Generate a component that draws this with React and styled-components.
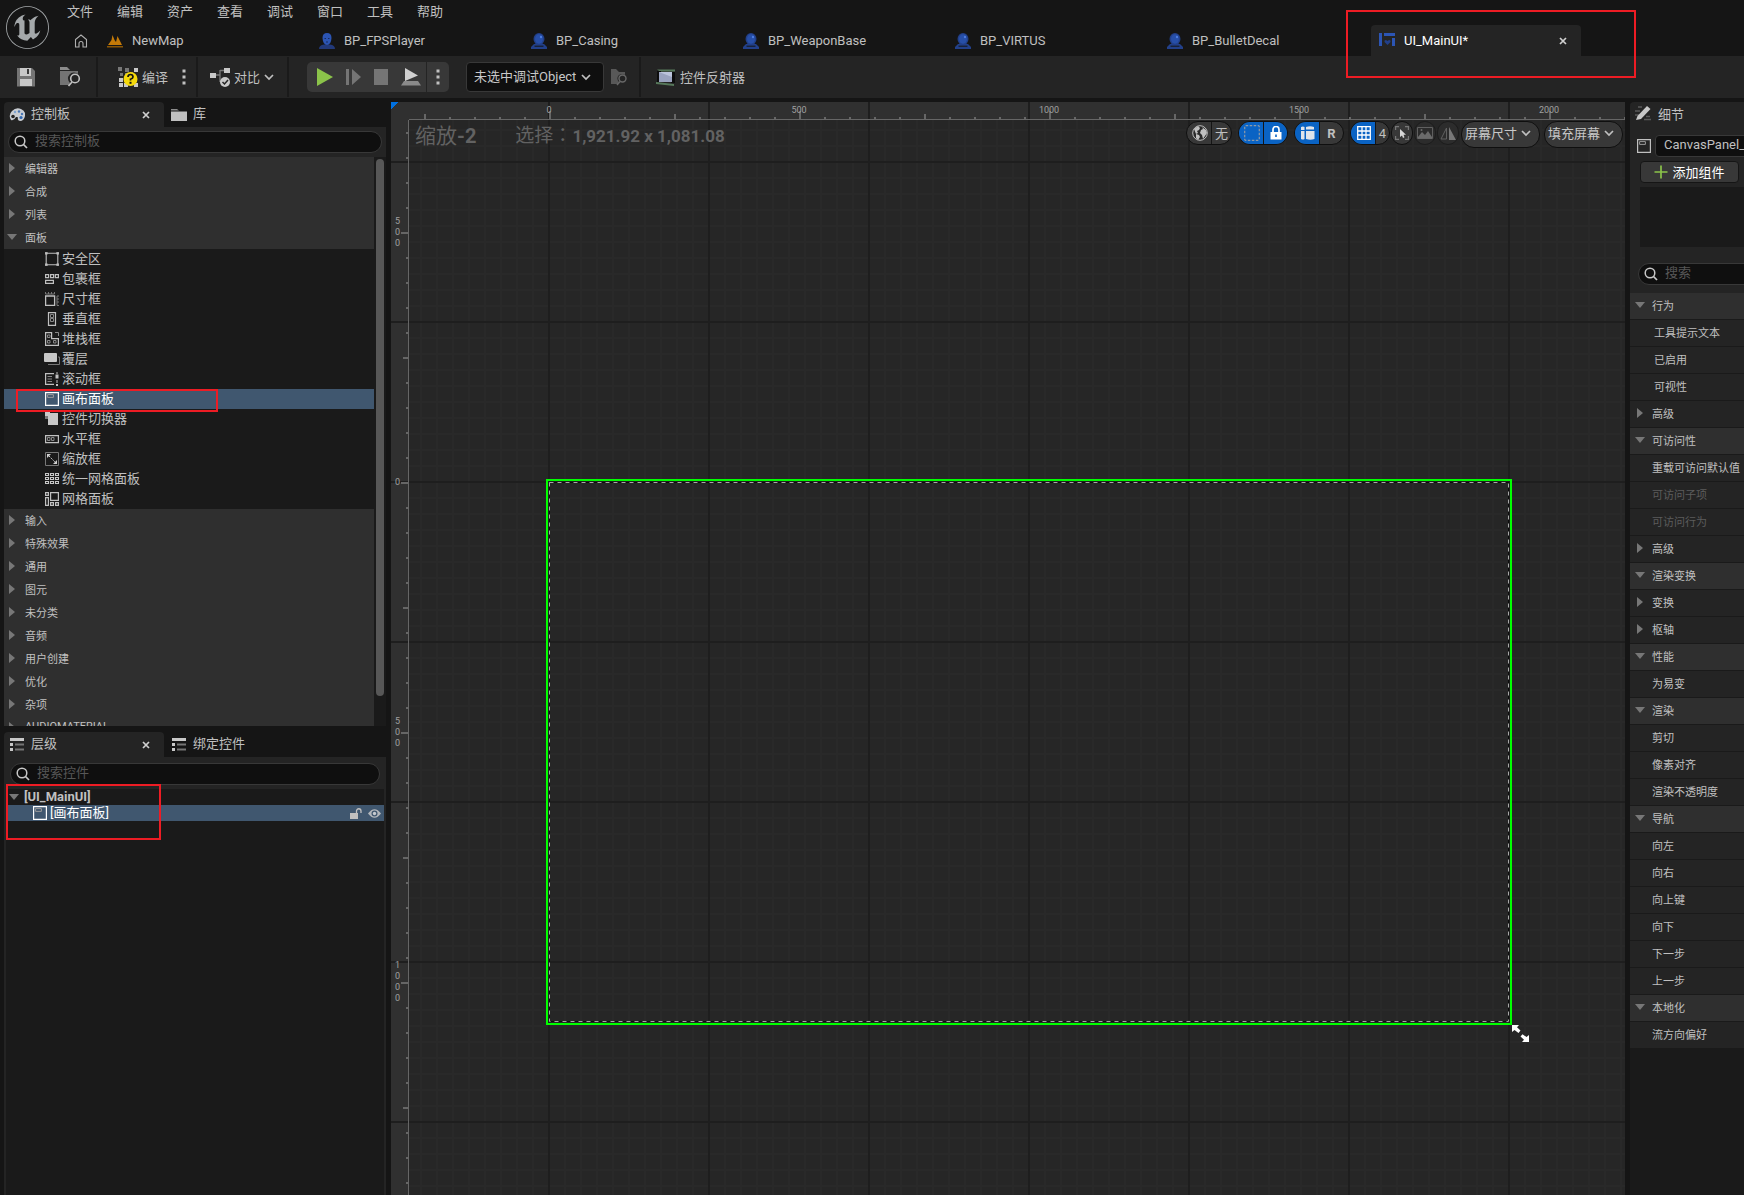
import styled, { createGlobalStyle, css } from 'styled-components';
import { SiUnrealengine } from 'react-icons/si';
import { useState } from 'react';

const GlobalStyle = createGlobalStyle`
    * {
        box-sizing: border-box;
    }
    body {
        margin: 0;
        background: #151515;
        overflow: hidden;
    }
    body, button, input, select {
        font-family: Roboto, "Noto Sans CJK SC", sans-serif;
        font-size: 13px;
        color: #c0c0c0;
    }
    button, input, select {
        margin: 0;
        padding: 0;
        border: none;
        outline: none;
        background: none;
    }
    ul {
        margin: 0;
        padding: 0;
        list-style: none;
    }
    svg {
        display: block;
        flex: none;
    }
`

/* ---------- icons ---------- */

// every drawing is [width, height, content]
const drawings = {
    home: [14, 14, <path d="M1.500 13V5.500L7 1l5.500 4.500V13H9V9.500a2 2 0 0 0-4 0V13z" fill="none" stroke="#b0b0b0" strokeWidth="1.100" />],
    map: [16, 16, <><path d="M1 12L4.500 7l1-5 2 5L9 9l1.500-6L13 8l2 4z" fill="#c47a08" /><path d="M0 13h16v1.500H0z" fill="#8a5606" /></>],
    pawn: [16, 16, <><path d="M0 16q0-4 5-4.500h6q5 .5 5 4.500z" fill="#22397a" /><path d="M3.500 5Q3.500 0 8 0t4.500 5Q12 12 8 12T3.500 5z" fill="#2c55b4" /><path d="M5.500 5.500h1.500M9 5.500h1.500M7 9h2" stroke="#182a5c" /></>],
    actor: [16, 16, <><path d="M0 16v-2l3-3h10l3 3v2z" fill="#22408a" /><path d="M3.500 13.200h9" stroke="#151515" /><ellipse cx="8" cy="6" rx="5.500" ry="6" fill="#22408a" /><ellipse cx="8" cy="6" rx="4" ry="4.700" fill="#274fa8" /><circle cx="10" cy="4" r="1.200" fill="#4b7be0" /></>],
    widget: [16, 16, <><path d="M0 0h3v13H0zM5 0h11v3H5zM13 5h3v8h-3z" fill="#2c55b4" /><path d="M8.500 12L5.500 9q-.5-2 1.500-2l1.500 1L10 7q2 0 1.500 2z" fill="#22408a" /></>],
    close: [8, 8, <path d="M1 1l6 6M7 1L1 7" stroke="#d0d0d0" strokeWidth="1.700" />],
    save: [18, 19, <><path d="M0 0h15l3 3v15.500H0z" fill="#747474" /><path d="M3 0h11v8H3z" fill="#c8c8c8" /><path d="M10 1h2v5h-2z" fill="#3a3a3a" /><path d="M3 11h12v7H3z" fill="#c8c8c8" /></>],
    browse: [21, 20, <><path d="M0 0h7l3 3H0z" fill="#8c8c8c" /><path d="M0 4h18v3a6 6 0 0 0-8 9l-1 2H0z" fill="#747474" /><circle cx="15" cy="11.500" r="4.300" fill="none" stroke="#c0c0c0" strokeWidth="1.600" /><path d="M12 15l-3.500 4" stroke="#c0c0c0" strokeWidth="1.600" /></>],
    browseSmall: [16, 17, <><path d="M0 0h5l3 3h6v3a4.500 4.500 0 0 0-6 7l-1 2H0z" fill="#585858" /><circle cx="11.500" cy="9.500" r="3.500" fill="none" stroke="#686868" strokeWidth="1.400" /><path d="M9 12.500L6 16" stroke="#686868" strokeWidth="1.400" /></>],
    compile: [20, 20, <>
        <path d="M0 0h4v4H0zM7 1h4v4H7zM2 6h3v3H2zM7 6h4v3H7zM12 5h3v3h-3z" fill="#777" />
        <path d="M16 1h4v4h-4zM1 11h4v4H1zM1 16h4v4H1zM6 16h4v4H6zM16 16h4v4h-4z" fill="#c8c8c8" />
        <circle cx="12.500" cy="12" r="7" fill="#f5d90a" />
        <path d="M10 10q0-2.500 2.500-2.500T15 10q0 1.500-2.500 2.200v1.300" fill="none" stroke="#151515" strokeWidth="1.700" />
        <path d="M11.500 14.800h2v2h-2z" fill="#151515" />
    </>],
    dots: [4, 18, <path d="M.5 1.500h3v3h-3zM.5 7.500h3v3h-3zM.5 13.500h3v3h-3z" fill="#c0c0c0" />],
    diff: [20, 19, <>
        <path d="M5 7h5M10 2v12M10 2.500h4M10 13.500h2" fill="none" stroke="#777" strokeWidth="1.300" />
        <path d="M0 5h6v5H0zM14 0h6v5h-6z" fill="#c8c8c8" />
        <circle cx="15" cy="14" r="5" fill="#c8c8c8" />
        <path d="M12.500 14l2 2 3.500-4" fill="none" stroke="#242424" strokeWidth="1.500" />
    </>],
    chevron: [10, 7, <path d="M1 1l4 4 4-4" fill="none" stroke="#c0c0c0" strokeWidth="1.700" />],
    play: [16, 18, <path d="M0 0l16 9L0 18z" fill="#8bc34a" />],
    step: [15, 16, <path d="M0 0h3v16H0zM6 0l9 8-9 8z" fill="#757575" />],
    stop: [14, 16, <path d="M0 0h14v16H0z" fill="#757575" />],
    eject: [20, 18, <><path d="M4 0l13 7.500L4 13z" fill="#d0d0d0" /><path d="M3 13h14l3 4.500H0z" fill="#8a8a8a" /></>],
    reflector: [20, 17, <>
        <path d="M1 .5h18v2H4z" fill="#56785a" /><path d="M0 13l18 2v2L0 15z" fill="#56785a" />
        <path d="M1 2h4v11H1zM15 3h4v11h-4z" fill="#0d0d0d" /><path d="M3 3h13v10H3z" fill="#9aa3bf" /><path d="M3 3h13v5z" fill="#bcc4dc" />
    </>],
    palette: [16, 14, <>
        <path d="M2 12Q-1 7 3 3q4-4 9-2 5 2 4 7-1 5-5 5-3-1-2-3 0-1.500-2-1-2 4-5 3z" fill="#c8ccd2" />
        <circle cx="4" cy="8.500" r="1.800" fill="#242424" /><circle cx="6" cy="4" r="1.200" fill="#7fa4d0" />
        <circle cx="10" cy="3.500" r="1.200" fill="#4876b4" /><circle cx="13" cy="6" r="1.200" fill="#4876b4" /><circle cx="12" cy="9.500" r="1.600" fill="#2f66b0" />
    </>],
    folder: [16, 12, <><path d="M0 0h6l2 1.500H0z" fill="#8c8c8c" /><path d="M0 2.500h16V12H0z" fill="#c0c0c0" /></>],
    search: [14, 14, <><circle cx="6" cy="6" r="4.800" fill="none" stroke="#c8c8c8" strokeWidth="1.500" /><path d="M9.500 9.500L13 13" stroke="#c8c8c8" strokeWidth="1.700" /></>],
    outline: [14, 13, <><path d="M0 0h14v3H0zM0 5h3v3H0zM0 10h3v3H0z" fill="#c8c8c8" /><path d="M5 5.500h9v2H5zM5 10.500h9v2H5z" fill="#757575" /></>],
    right: [10, 10, <path d="M2 0l6 5-6 5z" fill="#777" />],
    down: [10, 10, <path d="M0 2h10L5 8z" fill="#777" />],
    pencil: [16, 15, <><path d="M3 1h4M0 5h5M0 9h4M9 13.500h7M11 10.500h4" stroke="#5a5a5a" strokeWidth="1.500" /><path d="M1 14l1.500-4L12 0l3.500 3L6 13z" fill="#c8c8c8" /></>],
    plus: [14, 14, <path d="M7 .5v13M.5 7h13" stroke="#8bc34a" strokeWidth="1.700" />],
    lockOpen: [12, 11, <><path d="M0 5h8v6H0z" fill="#c0c0c0" /><path d="M6.500 5V3a2.200 2.200 0 0 1 4.500 0v2" fill="none" stroke="#c0c0c0" strokeWidth="1.300" /></>],
    eye: [13, 9, <><path d="M0 4.500Q6.500-4 13 4.500 6.500 13 0 4.500z" fill="#b4b8bc" /><circle cx="6.500" cy="4.500" r="3" fill="#40576f" /><circle cx="6.500" cy="4.500" r="1.700" fill="#c8ccd0" /></>],
    globe: [16, 16, <><circle cx="8" cy="8" r="7.300" fill="#2a2a2a" stroke="#c0c0c0" /><path d="M2 4l4-3 2 2-1 2-2 1 1 2-2 1zM4 9l3 1 1 2-2 3-2-2zM10 2l4 3 1 3-2 3-2 3-1-4-2-2 1-3 2-1z" fill="#c0c0c0" /></>],
    marquee: [16, 16, <rect x=".7" y=".7" width="14.600" height="14.600" rx="1" fill="none" stroke="#8f9aa6" strokeWidth="1.200" strokeDasharray="2.500 1.500" />],
    lock: [12, 14, <><path d="M.5 6h11v7.500H.5z" fill="#fff" /><path d="M3 6V3.500a3 3 0 0 1 6 0V6" fill="none" stroke="#fff" strokeWidth="1.700" /><path d="M6 8.500v2.500" stroke="#0a63c4" strokeWidth="1.600" /></>],
    blocks: [14, 14, <path d="M0 1q2-1 3.500 0v3H0zM0 5h3.500v8Q2 14 0 13zM5 1q4-1.500 8 0v2.500H5zM5 5h8.500v8q-4 1.500-8.500 0z" fill="#e0e4ea" />],
    grid: [14, 14, <path d="M.7.7h12.600v12.600H.7zM5 .7v12.600M9 .7v12.600M.7 5h12.600M.7 9h12.600" fill="none" stroke="#fff" strokeWidth="1.300" />],
    cursorBox: [14, 14, <><path d="M.6 4V.6H4M10 .6h3.400V4M13.400 10v3.400H10M4 13.400H.6V10" fill="none" stroke="#777" strokeWidth="1.200" /><path d="M5 3v8l2-1.500L8 12l1.500-.7-1-2.500H11z" fill="#d8d8d8" /></>],
    image: [16, 12, <><path d="M.5.500h15v11H.5z" fill="none" stroke="#606060" /><path d="M1 10l4-5 3 3 3-4 4 6v1.500H1z" fill="#6a6a6a" /><circle cx="4.500" cy="3" r="1" fill="#6a6a6a" /></>],
    mirror: [16, 13, <><path d="M6.500 1v11H1z" fill="none" stroke="#606060" /><path d="M9 0l7 13H9z" fill="#777" /></>],
    resize: [18, 18, <path d="M0 0h7L5 2.200l3.500 3.300L6.500 8 2.500 5 0 7zM17 17h-7l2-2.200L8.500 11.500l2-2.300L14.500 12 17 10z" fill="#fff" />],

    safeZone: [14, 14, <path d="M1.200 1.200h11.600v11.600H1.200zM0 0h2v2H0zM12 0h2v2h-2zM0 12h2v2H0zM12 12h2v2h-2z" fill="none" stroke="#c0c0c0" strokeWidth="1.100" />],
    wrapBox: [14, 14, <path d="M.6 2.600h3v3h-3zM5.600 2.600h3v3h-3zM10.400 2.600h3v3h-3zM.6 8.400h7.800v3H.6z" fill="none" stroke="#c0c0c0" strokeWidth="1.200" />],
    sizeBox: [14, 14, <><path d="M.6 4h9v9.400h-9z" fill="none" stroke="#c0c0c0" strokeWidth="1.300" /><path d="M.5 0v2h9V0M3.500 0v2M6.500 0v2M14 4h-2v9.500h2M12 7h2M12 10h2" fill="none" stroke="#777" /></>],
    verticalBox: [14, 14, <><path d="M3.500.6h7v12.800h-7z" fill="none" stroke="#c0c0c0" strokeWidth="1.200" /><path d="M5.500 2.500h3v3h-3zM5.500 6.500h3v3h-3z" fill="none" stroke="#888" /></>],
    stackBox: [14, 14, <><path d="M.6.600h6v6h6.800v6.800H.6z" fill="none" stroke="#c0c0c0" strokeWidth="1.200" /><path d="M2.500 3h2.500v2.500H2.500zM2.500 8.500h2.500V11H2.500zM8.500 8.500H11V11H8.500zM10 .5h3.500V4" fill="none" stroke="#888" /></>],
    overlay: [16, 14, <><path d="M4 12.500h11.500V5H14" fill="none" stroke="#777" /><rect y="1" width="13" height="9" rx="1" fill="#c8c8c8" /></>],
    scrollBox: [14, 14, <><path d="M9 1.600H.6v10.800H9" fill="none" stroke="#c0c0c0" strokeWidth="1.200" /><path d="M2.500 4.500H7M2.500 7H7M2.500 9.500H7" stroke="#888" /><path d="M10.500 2.500h3v4h-3zM11.500 0h1v2h-1zM11.500 8h1v3h-1zM11 12h2v2h-2z" fill="#c0c0c0" /></>],
    canvas: [14, 14, <><path d="M.6.600h12.800v12.800H.6z" fill="none" stroke="currentColor" strokeWidth="1.200" /><path d="M2.600 2.600h5.800v2.800H2.600z" fill="none" stroke="#9a9a9a" /></>],
    switcher: [14, 14, <><path d="M3 1h10v12H3z" fill="#c8c8c8" /><path d="M0 0h5v4H0z" fill="#c8c8c8" /><path d="M0 4h3v3H0z" fill="#777" /></>],
    horizontalBox: [14, 14, <><path d="M.6 3.600h12.800v7H.6z" fill="none" stroke="#c0c0c0" strokeWidth="1.200" /><path d="M2.500 5.500h2.500v3H2.500zM6.500 5.500H9v3H6.500z" fill="none" stroke="#888" /></>],
    scaleBox: [14, 14, <><path d="M.5.500h13v13H.5z" fill="none" stroke="#777" /><path d="M2 2h4L2 6zM12 12H8l4-4z" fill="#d0d0d0" /><path d="M4 4l6 6" stroke="#d0d0d0" strokeDasharray="1.500 1" /></>],
    uniformGrid: [14, 14, <path d="M.5 1.500h3v2h-3zM5.500 1.500h3v2h-3zM10.500 1.500h3v2h-3zM.5 5.500h3v2h-3zM5.500 5.500h3v2h-3zM10.500 5.500h3v2h-3zM.5 9.500h3v2h-3zM5.500 9.500h3v2h-3zM10.500 9.500h3v2h-3z" fill="none" stroke="#c8c8c8" strokeWidth="1.100" />],
    gridPanel: [14, 14, <path d="M.6.600h2.800v2.800H.6zM5.600.600h7.800v7.800H5.600zM.6 5.600h2.800v7.800H.6zM5.600 10.600h2.800v2.800H5.600zM10.600 10.600h2.800v2.800h-2.800z" fill="none" stroke="#c0c0c0" strokeWidth="1.200" />],
}

const Icon = ({ name }) => {
    const [width, height, content] = drawings[name];
    return (
        <svg width={width} height={height} viewBox={`0 0 ${width} ${height}`} aria-hidden="true">
            {content}
        </svg>
    )
}

/* ---------- header ---------- */

const Page = styled.div`
    display: flex;
    flex-direction: column;
    height: 100vh;
    overflow: hidden;
`
const Header = styled.header`
    display: flex;
    height: 56px;
`
const Logo = styled.a`
    padding: 6px;
    color: #a4a8aa;
    line-height: 0;
`
const HeaderRows = styled.div`
    flex: 1;
    min-width: 0;
`
const Menu = styled.nav`
    display: flex;
    height: 25px;
`
const MenuItem = styled.button`
    width: 50px;
    height: 21px;
`
const TabBar = styled.div`
    display: flex;
    gap: 2px;
    height: 31px;
`
const HomeButton = styled.button`
    display: flex;
    align-items: center;
    justify-content: center;
    width: 42px;
    padding-left: 10px;
`
const DocumentTab = styled.div`
    position: relative;
    display: flex;
    align-items: center;
    flex: none;
    width: 210px;
    padding: 0 14px 0 8px;
    border-radius: 4px 4px 0 0;
    background: ${props => props.$active ? "#242424" : "none"};
`
const TabButton = styled.button`
    display: flex;
    align-items: center;
    gap: 9px;
    flex: 1;
    color: ${props => props.$active ? "#ffffff" : "#c0c0c0"};
`
const PlainButton = styled.button`
    display: flex;
    align-items: center;
    justify-content: center;
`
// lifts Chinese labels to the optical middle of the icon beside them
const Label = styled.span`
    padding-bottom: 2px;
`
const Mark = styled.div`
    position: absolute;
    z-index: 5;
    left: ${props => props.$left}px;
    top: ${props => props.$top}px;
    width: ${props => props.$width}px;
    height: ${props => props.$height}px;
    border: 2px solid #ed1c24;
    pointer-events: none;
`

/* ---------- toolbar ---------- */

const Toolbar = styled.div`
    display: flex;
    align-items: center;
    flex: none;
    height: 42px;
    margin-bottom: 4px;
    background: #242424;
`
const ToolGroup = styled.div`
    display: flex;
    align-items: center;
    height: 40px;
    gap: ${props => props.$gap}px;
    padding: 0 ${props => props.$right}px 0 ${props => props.$left}px;
    border-right: ${props => props.$last ? "none" : "2px solid #1a1a1a"};
`
const ToolButton = styled(PlainButton)`
    gap: 4px;
    white-space: nowrap;
`
const PlayControls = styled.div`
    display: flex;
    align-items: center;
    height: 30px;
    margin-right: 10px;
    border-radius: 5px;
    background: #383838;
`
const PlayButtons = styled.div`
    display: flex;
    align-items: center;
    gap: 13px;
    height: 30px;
    padding: 0 5px 0 10px;
    border-right: 1px solid #242424;
`
const PlayMenu = styled(PlainButton)`
    width: 22px;
    height: 30px;
`
const SelectBox = styled.label`
    display: flex;
    align-items: center;
    width: 138px;
    height: 30px;
    padding: 0 12px 0 7px;
    border: 1px solid #383838;
    border-radius: 4px;
    background: #0f0f0f;
`
const Select = styled.select`
    flex: 1;
    min-width: 0;
    appearance: none;
    color: #c8c8c8;
    line-height: 20px;
`

/* ---------- docked panels ---------- */

const Workspace = styled.main`
    display: grid;
    grid-template-columns: 382px 1fr 114px;
    gap: 5px;
    flex: 1;
    min-height: 0;
    padding-left: 4px;
`
const Column = styled.div`
    display: flex;
    flex-direction: column;
    gap: 6px;
    min-width: 0;
    min-height: 0;
`
const Panel = styled.section`
    display: flex;
    flex-direction: column;
    flex: ${props => props.$share} 1 0;
    min-height: 0;
`
const PanelTabs = styled.div`
    display: flex;
    flex: none;
    height: 25px;
`
const PanelTab = styled.div`
    display: flex;
    align-items: center;
    width: 160px;
    padding: 0 14px 0 ${props => props.$active ? 5 : 7}px;
    border-radius: 4px 4px 0 0;
    background: ${props => props.$active ? "#242424" : "none"};
`
const PanelTabButton = styled(PlainButton)`
    gap: 6px;
    flex: 1;
    justify-content: flex-start;
    line-height: 18px;
`
const IconSlot = styled.span`
    display: flex;
    align-items: center;
    justify-content: center;
    flex: none;
    width: ${props => props.$width}px;
`
const SearchArea = styled.div`
    flex: none;
    height: ${props => props.$height}px;
    padding: ${props => props.$pad};
    background: #242424;
`
const SearchBox = styled.label`
    display: flex;
    align-items: center;
    gap: 7px;
    height: 22px;
    padding-left: 5px;
    border: 1px solid #383838;
    border-radius: 11px;
    background: #0f0f0f;
`
const SearchInput = styled.input`
    flex: 1;
    min-width: 0;
    padding-bottom: 3px;
    &::placeholder {
        color: #575757;
    }
`
const ListArea = styled.div`
    display: flex;
    flex: 1;
    min-height: 0;
    overflow: hidden;
    background: #1a1a1a;
`
const CategoryList = styled.ul`
    flex: 1;
`
const Category = styled.button`
    display: flex;
    align-items: center;
    gap: 8px;
    width: 100%;
    height: 23px;
    padding: 0 0 2px 3px;
    background: #2f2f2f;
    font-size: 11px;
`
const WidgetRow = styled.li`
    position: relative;
    display: flex;
    align-items: center;
    gap: 2px;
    height: 20px;
    padding-left: 40px;
    line-height: 18px;
    color: ${props => props.$selected ? "#ffffff" : "#c0c0c0"};
    background: ${props => props.$selected ? "#40576f" : "none"};
`
const ScrollTrack = styled.div`
    width: 12px;
    padding: 2px;
`
const ScrollThumb = styled.div`
    width: 8px;
    height: 95%;
    border-radius: 4px;
    background: #575757;
`
const Tree = styled.ul`
    position: relative;
    flex: 1;
    border: solid #242424;
    border-width: 0 2px;
    background: #1a1a1a;
`
const TreeRow = styled.li`
    display: flex;
    align-items: center;
    height: 16px;
    line-height: 16px;
    gap: ${props => props.$child ? 3 : 5}px;
    padding: 0 3px 0 ${props => props.$child ? 27 : 3}px;
    font-weight: ${props => props.$child ? 400 : 700};
    color: ${props => props.$child ? "#ffffff" : "#c0c0c0"};
    background: ${props => props.$child ? "#40576f" : "none"};
`
const RowActions = styled.span`
    display: flex;
    gap: 6px;
    margin-left: auto;
`

/* ---------- designer viewport ---------- */

// grid lines repeat each 160px, the fine ones each 16px
const majorLines = (x, y) => css`
    linear-gradient(90deg, #1e1e1e 2px, transparent 2px) ${x}px 0 / 160px 100% repeat-x,
    linear-gradient(#1e1e1e 2px, transparent 2px) 0 ${y}px / 100% 160px repeat-y
`
const minorLines = (x, y) => css`
    linear-gradient(90deg, #292929 2px, transparent 2px) ${x}px 0 / 16px 100% repeat-x,
    linear-gradient(#292929 2px, transparent 2px) 0 ${y}px / 100% 16px repeat-y
`
const Viewport = styled.section`
    display: grid;
    grid-template-columns: 18px 1fr;
    grid-template-rows: 18px 1fr;
    min-width: 0;
    min-height: 0;
    overflow: hidden;
    background: ${majorLines(157, 59)}, #303030;
`
const Corner = styled.div`
    width: 8px;
    height: 8px;
    background: linear-gradient(135deg, #0070e0 50%, transparent 50%);
`
const TopRuler = styled.div`
    display: flex;
    min-width: 0;
    overflow: hidden;
    padding-left: 15px;
    border-bottom: 1px solid #666;
    background:
        linear-gradient(90deg, #666 2px, transparent 2px) 15px 100% / 25px 2px repeat-x,
        linear-gradient(90deg, #666 2px, transparent 2px) 15px 100% / 125px 5px repeat-x,
        linear-gradient(90deg, #666 2px, transparent 2px) 140px 100% / 250px 8px repeat-x;
`
const TopLabel = styled.span`
    flex: none;
    width: 250px;
    font-size: 9px;
    line-height: 16px;
    text-align: center;
    color: #a0a0a0;
`
const LeftRuler = styled.div`
    display: flex;
    flex-direction: column;
    min-height: 0;
    overflow: hidden;
    border-right: 1px solid #666;
    background:
        linear-gradient(#666 2px, transparent 2px) 100% 12px / 2px 25px repeat-y,
        linear-gradient(#666 2px, transparent 2px) 100% 112px / 5px 125px repeat-y,
        linear-gradient(#666 2px, transparent 2px) 100% 112px / 7px 250px repeat-y;
    &::before {
        content: "";
        flex: none;
        margin-top: -13px;
    }
`
const LeftLabel = styled.span`
    display: flex;
    align-items: center;
    flex: none;
    width: 9px;
    height: 250px;
    padding-left: 4px;
    font-size: 9px;
    line-height: 11px;
    word-break: break-all;
    color: #a0a0a0;
`
const Canvas = styled.div`
    position: relative;
    min-width: 0;
    background: ${majorLines(139, 41)}, ${minorLines(11, 9)}, #262626;
`
const CanvasBar = styled.div`
    display: flex;
    align-items: flex-start;
    padding: 1px 2px 0 6px;
`
// the TC face centres the full-width colon
const Caption = styled.span`
    margin-right: ${props => props.$space}px;
    font-family: Roboto, "Noto Sans CJK TC", sans-serif;
    font-size: ${props => props.$size}px;
    line-height: 30px;
    white-space: nowrap;
    color: #626262;
`
const CaptionValue = styled.b`
    font-size: ${props => props.$size}px;
    font-weight: 700;
`
const CanvasTools = styled.div`
    display: flex;
    align-items: flex-start;
    gap: 1px;
    margin-left: auto;
`
const Pill = styled.div`
    display: flex;
    width: ${props => props.$width}px;
    height: 24px;
    margin-right: ${props => props.$space}px;
    overflow: hidden;
    border: 1px solid #0f0f0f;
    border-radius: 12px;
    background: #383838;
`
const PillButton = styled(PlainButton)`
    flex: ${props => props.$first ? "0 0 24px" : "1"};
    padding-left: ${props => props.$first ? 2 : 0}px;
    border-left: ${props => props.$first ? "none" : "1px solid #151515"};
    font-weight: ${props => props.$bold ? 700 : 400};
    background: ${props => props.$on ? "#0a63c4" : "none"};
`
const RoundButton = styled(PlainButton)`
    width: 22px;
    height: 24px;
    border: 1px solid ${props => props.disabled ? "#1c1c1c" : "#0f0f0f"};
    border-radius: 11px;
    background: ${props => props.disabled ? "#2c2c2c" : "#383838"};
`
const CanvasSelect = styled(SelectBox)`
    width: 79px;
    height: 27px;
    margin-left: ${props => props.$space}px;
    padding: 0 8px 2px 3px;
    border-color: #0f0f0f;
    border-radius: 13px;
    background: #383838;
`
const Selection = styled.div`
    position: absolute;
    left: 137px;
    top: 359px;
    width: 966px;
    height: 546px;
    padding: 1px;
    border: 2px solid #00ff00;
`
const DashedLine = styled.svg`
    width: 100%;
    height: 100%;
`
const ResizeCursor = styled.div`
    position: absolute;
    left: 1103px;
    top: 905px;
`

/* ---------- details ---------- */

const Details = styled.section`
    min-width: 0;
    overflow: hidden;
    border-radius: 4px 0 0 0;
    background: #1a1a1a;
`
const DetailsTop = styled.div`
    height: 191px;
    background: #242424;
`
const DetailsTitle = styled.h2`
    display: flex;
    align-items: center;
    gap: 7px;
    height: 22px;
    margin: 0 0 11px;
    padding-left: 5px;
    font-size: 13px;
    font-weight: 400;
`
const NameRow = styled.label`
    display: flex;
    align-items: center;
    gap: 4px;
    height: 22px;
    padding-left: 7px;
`
const NameInput = styled.input`
    flex: none;
    width: 160px;
    height: 22px;
    padding: 0 0 3px 8px;
    border: 1px solid #383838;
    border-radius: 4px;
    background: #0f0f0f;
`
const AddButton = styled(PlainButton)`
    gap: 4px;
    width: 99px;
    height: 22px;
    margin: 4px 0 4px 10px;
    border: 1px solid #151515;
    border-radius: 4px;
    background: #383838;
    color: #ffffff;
`
const ComponentBox = styled.div`
    height: 60px;
    margin: 0 0 16px 10px;
    background: #1a1a1a;
`
const DetailsSearch = styled(SearchBox)`
    width: 200px;
    margin-left: 8px;
`
const PropertyRow = styled.li`
    display: flex;
    align-items: center;
    gap: 7px;
    height: 27px;
    padding: 0 0 2px ${props => props.$inner ? 7 : 5}px;
    border-bottom: 1px solid #1a1a1a;
    font-size: 11px;
    white-space: nowrap;
    color: ${props => props.$dim ? "#5c5c5c" : "#c0c0c0"};
    background: ${props => props.$head ? "#2f2f2f" : "#242424"};
`

const menuItems = ["文件", "编辑", "资产", "查看", "调试", "窗口", "工具", "帮助"];

const documents = [
    { icon: "map", title: "NewMap" },
    { icon: "pawn", title: "BP_FPSPlayer" },
    { icon: "actor", title: "BP_Casing" },
    { icon: "actor", title: "BP_WeaponBase" },
    { icon: "actor", title: "BP_VIRTUS" },
    { icon: "actor", title: "BP_BulletDecal" },
    { icon: "widget", title: "UI_MainUI*", active: true },
];

const panelWidgets = [
    ["safeZone", "安全区"],
    ["wrapBox", "包裹框"],
    ["sizeBox", "尺寸框"],
    ["verticalBox", "垂直框"],
    ["stackBox", "堆栈框"],
    ["overlay", "覆层"],
    ["scrollBox", "滚动框"],
    ["canvas", "画布面板"],
    ["switcher", "控件切换器"],
    ["horizontalBox", "水平框"],
    ["scaleBox", "缩放框"],
    ["uniformGrid", "统一网格面板"],
    ["gridPanel", "网格面板"],
];

const categories = [
    "编辑器", "合成", "列表", "面板", "输入", "特殊效果", "通用", "图元",
    "未分类", "音频", "用户创建", "优化", "杂项", "AUDIOMATERIAL",
];

// kind: head = open section, fold = closed group, item / inner = property, off = disabled property
const properties = [
    ["head", "行为"], ["inner", "工具提示文本"], ["inner", "已启用"], ["inner", "可视性"], ["fold", "高级"],
    ["head", "可访问性"], ["item", "重载可访问默认值"], ["off", "可访问子项"], ["off", "可访问行为"], ["fold", "高级"],
    ["head", "渲染变换"], ["fold", "变换"], ["fold", "枢轴"],
    ["head", "性能"], ["item", "为易变"],
    ["head", "渲染"], ["item", "剪切"], ["item", "像素对齐"], ["item", "渲染不透明度"],
    ["head", "导航"], ["item", "向左"], ["item", "向右"], ["item", "向上键"], ["item", "向下"], ["item", "下一步"], ["item", "上一步"],
    ["head", "本地化"], ["item", "流方向偏好"],
];

const TopBar = () => (
    <Header>
        <Logo href="#" aria-label="Unreal Engine"><SiUnrealengine size={43} /></Logo>
        <HeaderRows>
            <Menu>
                {menuItems.map(item => <MenuItem key={item}>{item}</MenuItem>)}
            </Menu>
            <TabBar>
                <HomeButton aria-label="主页"><Icon name="home" /></HomeButton>
                {documents.map(doc => (
                    <DocumentTab key={doc.title} $active={doc.active}>
                        <TabButton $active={doc.active}><Icon name={doc.icon} />{doc.title}</TabButton>
                        {doc.active && <PlainButton aria-label="关闭"><Icon name="close" /></PlainButton>}
                        {doc.active && <Mark $left={-25} $top={-15} $width={290} $height={68} />}
                    </DocumentTab>
                ))}
            </TabBar>
        </HeaderRows>
    </Header>
)

const Tools = () => (
    <Toolbar>
        <ToolGroup $left={17} $right={15} $gap={25}>
            <ToolButton aria-label="保存"><Icon name="save" /></ToolButton>
            <ToolButton aria-label="浏览"><Icon name="browse" /></ToolButton>
        </ToolGroup>
        <ToolGroup $left={20} $right={10} $gap={14}>
            <ToolButton><Icon name="compile" /><Label>编译</Label></ToolButton>
            <ToolButton aria-label="编译选项"><Icon name="dots" /></ToolButton>
        </ToolGroup>
        <ToolGroup $left={12} $right={13} $gap={0}>
            <ToolButton><Icon name="diff" /><Label>对比</Label><Icon name="chevron" /></ToolButton>
        </ToolGroup>
        <ToolGroup $left={18} $right={12} $gap={7}>
            <PlayControls>
                <PlayButtons>
                    <PlainButton aria-label="播放"><Icon name="play" /></PlainButton>
                    <PlainButton aria-label="下一帧"><Icon name="step" /></PlainButton>
                    <PlainButton aria-label="停止"><Icon name="stop" /></PlainButton>
                    <PlainButton aria-label="弹出"><Icon name="eject" /></PlainButton>
                </PlayButtons>
                <PlayMenu aria-label="播放选项"><Icon name="dots" /></PlayMenu>
            </PlayControls>
            <SelectBox>
                <Select aria-label="调试对象">
                    <option>未选中调试Object</option>
                </Select>
                <Icon name="chevron" />
            </SelectBox>
            <PlainButton aria-label="查找"><Icon name="browseSmall" /></PlainButton>
        </ToolGroup>
        <ToolGroup $left={15} $right={0} $gap={0} $last>
            <ToolButton><Icon name="reflector" /><Label>控件反射器</Label></ToolButton>
        </ToolGroup>
    </Toolbar>
)

const DockTabs = ({ tabs }) => (
    <PanelTabs>
        {tabs.map(([icon, title], index) => (
            <PanelTab key={title} $active={index === 0}>
                <PanelTabButton><IconSlot $width={16}><Icon name={icon} /></IconSlot><Label>{title}</Label></PanelTabButton>
                {index === 0 && <PlainButton aria-label="关闭"><Icon name="close" /></PlainButton>}
            </PanelTab>
        ))}
    </PanelTabs>
)

const Palette = () => {
    const [search, setSearch] = useState("");

    return (
        <Panel $share={624}>
            <DockTabs tabs={[["palette", "控制板"], ["folder", "库"]]} />
            <SearchArea $height={30} $pad="4px 4px 0">
                <SearchBox>
                    <Icon name="search" />
                    <SearchInput aria-label="搜索控制板" placeholder="搜索控制板" value={search} onChange={(event) => setSearch(event.target.value)} />
                </SearchBox>
            </SearchArea>
            <ListArea>
                <CategoryList>
                    {categories.map(name => (
                        <li key={name}>
                            <Category><Icon name={name === "面板" ? "down" : "right"} />{name}</Category>
                            {name === "面板" && (
                                <ul>
                                    {panelWidgets.map(([icon, label]) => (
                                        <WidgetRow key={label} $selected={icon === "canvas"}>
                                            <IconSlot $width={16}><Icon name={icon} /></IconSlot>
                                            {label}
                                            {icon === "canvas" && <Mark $left={12} $top={0} $width={202} $height={23} />}
                                        </WidgetRow>
                                    ))}
                                </ul>
                            )}
                        </li>
                    ))}
                </CategoryList>
                <ScrollTrack><ScrollThumb /></ScrollTrack>
            </ListArea>
        </Panel>
    )
}

const Hierarchy = () => {
    const [search, setSearch] = useState("");

    return (
        <Panel $share={463}>
            <DockTabs tabs={[["outline", "层级"], ["outline", "绑定控件"]]} />
            <SearchArea $height={32} $pad="6px 6px 0">
                <SearchBox>
                    <Icon name="search" />
                    <SearchInput aria-label="搜索控件" placeholder="搜索控件" value={search} onChange={(event) => setSearch(event.target.value)} />
                </SearchBox>
            </SearchArea>
            <Tree>
                <TreeRow><Icon name="down" />[UI_MainUI]</TreeRow>
                <TreeRow $child>
                    <Icon name="canvas" />[画布面板]
                    <RowActions>
                        <PlainButton aria-label="锁定"><Icon name="lockOpen" /></PlainButton>
                        <PlainButton aria-label="可见"><Icon name="eye" /></PlainButton>
                    </RowActions>
                </TreeRow>
                <Mark $left={0} $top={-5} $width={155} $height={56} />
            </Tree>
        </Panel>
    )
}

const Designer = () => (
    <Viewport>
        <Corner />
        <TopRuler>
            {[0, 500, 1000, 1500, 2000].map(value => <TopLabel key={value}>{value}</TopLabel>)}
        </TopRuler>
        <LeftRuler>
            {[-500, 0, 500, 1000].map(value => <LeftLabel key={value}>{Math.abs(value)}</LeftLabel>)}
        </LeftRuler>
        <Canvas>
            <CanvasBar>
                <Caption $size={21} $space={39}>缩放<CaptionValue $size={20}>-2</CaptionValue></Caption>
                <Caption $size={19} $space={0}>选择：<CaptionValue $size={17}>1,921.92 x 1,081.08</CaptionValue></Caption>
                <CanvasTools>
                    <Pill $width={46} $space={5}>
                        <PillButton $first aria-label="本地化预览"><Icon name="globe" /></PillButton>
                        <PillButton><Label>无</Label></PillButton>
                    </Pill>
                    <Pill $width={50} $space={5}>
                        <PillButton $first $on aria-label="轮廓"><Icon name="marquee" /></PillButton>
                        <PillButton $on aria-label="遵守锁定"><Icon name="lock" /></PillButton>
                    </Pill>
                    <Pill $width={50} $space={5}>
                        <PillButton $first $on aria-label="布局"><Icon name="blocks" /></PillButton>
                        <PillButton $bold>R</PillButton>
                    </Pill>
                    <Pill $width={40} $space={0}>
                        <PillButton $first $on aria-label="网格对齐"><Icon name="grid" /></PillButton>
                        <PillButton>4</PillButton>
                    </Pill>
                    <RoundButton aria-label="缩放到适合"><Icon name="cursorBox" /></RoundButton>
                    <RoundButton disabled aria-label="背景图"><Icon name="image" /></RoundButton>
                    <RoundButton disabled aria-label="翻转"><Icon name="mirror" /></RoundButton>
                    <CanvasSelect $space={1}>
                        <Select aria-label="屏幕尺寸"><option>屏幕尺寸</option></Select>
                        <Icon name="chevron" />
                    </CanvasSelect>
                    <CanvasSelect $space={3}>
                        <Select aria-label="填充屏幕"><option>填充屏幕</option></Select>
                        <Icon name="chevron" />
                    </CanvasSelect>
                </CanvasTools>
            </CanvasBar>
            <Selection>
                <DashedLine viewBox="0 0 960 540">
                    <rect x=".5" y=".5" width="959" height="539" fill="none" stroke="#0c0c0c" />
                    <rect x=".5" y=".5" width="959" height="539" fill="none" stroke="#a8a8a8" strokeDasharray="4 4" />
                </DashedLine>
            </Selection>
            <ResizeCursor><Icon name="resize" /></ResizeCursor>
        </Canvas>
    </Viewport>
)

const DetailsPanel = () => (
    <Details>
        <DetailsTop>
            <DetailsTitle><Icon name="pencil" />细节</DetailsTitle>
            <NameRow>
                <Icon name="canvas" />
                <NameInput aria-label="名称" defaultValue="CanvasPanel_" />
            </NameRow>
            <AddButton><Icon name="plus" /><Label>添加组件</Label></AddButton>
            <ComponentBox />
            <DetailsSearch>
                <Icon name="search" />
                <SearchInput aria-label="搜索" placeholder="搜索" />
            </DetailsSearch>
        </DetailsTop>
        <ul>
            {properties.map(([kind, label], index) => (
                <PropertyRow key={index} $head={kind === "head"} $inner={kind === "inner"} $dim={kind === "off"}>
                    <IconSlot $width={10}>
                        {kind === "head" && <Icon name="down" />}
                        {kind === "fold" && <Icon name="right" />}
                    </IconSlot>
                    {label}
                </PropertyRow>
            ))}
        </ul>
    </Details>
)

const App = () => {
    return (
        <Page>
            <GlobalStyle />
            <TopBar />
            <Tools />
            <Workspace>
                <Column>
                    <Palette />
                    <Hierarchy />
                </Column>
                <Designer />
                <DetailsPanel />
            </Workspace>
        </Page>
    )
}

export default App;
